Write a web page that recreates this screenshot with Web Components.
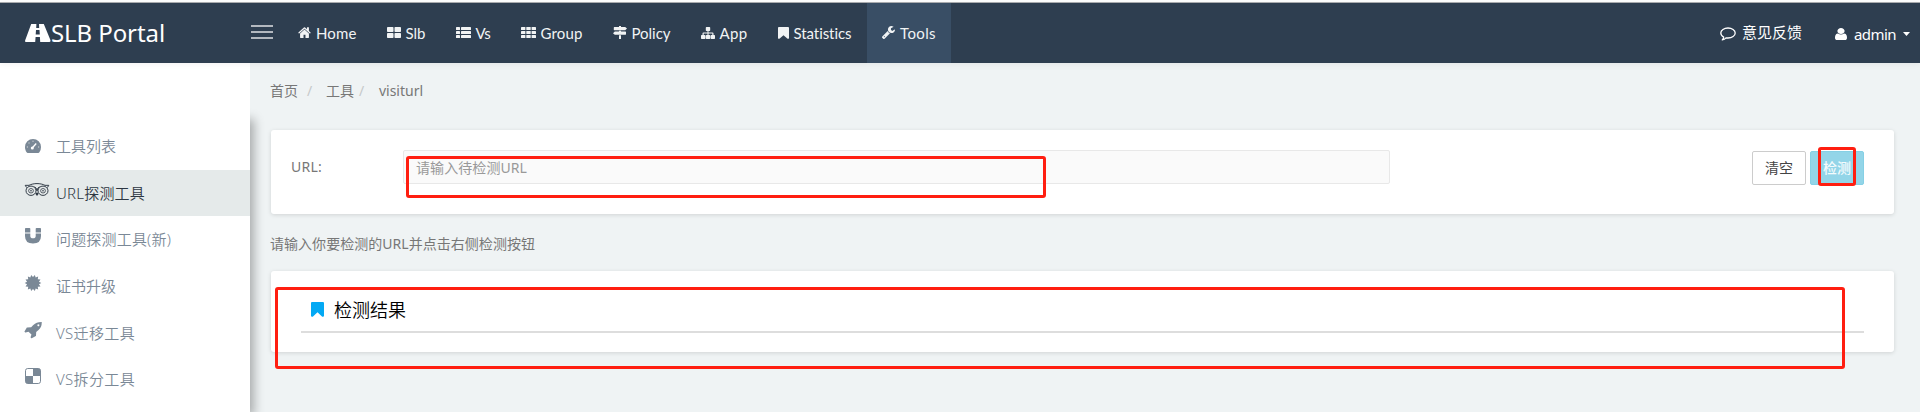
<!DOCTYPE html>
<html lang="zh"><head><meta charset="utf-8"><title>SLB Portal</title>
<style>html,body{margin:0;height:100%;overflow:hidden;background:#eff3f4}</style></head>
<body><slb-app></slb-app>
<script>
const burst=Array.from({length:28},(_,i)=>{const r=i%2?6.1:8.3,a=i*Math.PI/14;return (8+r*Math.cos(a)).toFixed(2)+','+(8+r*Math.sin(a)).toFixed(2)}).join(' ');
const ICONS={
road:['0 0 26 18','<path fill-rule="evenodd" d="M6.2 0H11.4L11.2 4H14.2L14 0H18.8L25.5 16.2Q25.8 18 24.5 18H15.2L14.9 13H10.6L10.2 18H1Q-.3 18 .1 16.4ZM11 6L10.7 10.5H14.8L14.5 6Z"/>'],
home:['50 220 1692 1320','<path d="M1472 992v480q0 26-19 45t-45 19h-384v-384h-256v384h-384q-26 0-45-19t-19-45v-480q0-1 .5-3t.5-3l575-474 575 474q1 2 1 6zm223-69l-62 74q-8 9-21 11h-3q-13 0-21-7l-692-577-692 577q-12 8-24 7-13-2-21-11l-62-74q-8-10-7-23.5t11-21.5l719-599q32-26 76-26t76 26l244 204v-195q0-14 9-23t23-9h192q14 0 23 9t9 23v408l219 182q10 8 11 21.5t-7 23.5z"/>'],
large:['0 0 14 11','<rect width="6.5" height="5" rx=".8"/><rect x="7.5" width="6.5" height="5" rx=".8"/><rect y="6" width="6.5" height="5" rx=".8"/><rect x="7.5" y="6" width="6.5" height="5" rx=".8"/>'],
list:['0 0 15 11',[0,4,8].map(y=>`<rect y="${y}" width="4" height="3" rx=".6"/><rect x="5" y="${y}" width="10" height="3" rx=".6"/>`).join('')],
grid:['0 0 15 11',[0,4,8].map(y=>[0,5.3,10.6].map(x=>`<rect x="${x}" y="${y}" width="4.4" height="3" rx=".6"/>`).join('')).join('')],
signs:['0 0 14 14','<path d="M6 0H8V1H12.2L14 2.7 12.2 4.5H1.3Q.8 4.5.8 4V1.5Q.8 1 1.3 1H6ZM6 5H8V6H12.5Q13 6 13 6.5V9Q13 9.5 12.5 9.5H1.8L0 7.8 1.8 6H6ZM6 10H8V14H6Z"/>'],
tree:['0 0 14 12','<path d="M5.5 0h3q.7 0 .7.7v2.6q0 .7-.7.7h-1v1.5h4q1 0 1 1V8h.8q.7 0 .7.7v2.6q0 .7-.7.7h-3q-.7 0-.7-.7V8.700q0-.7.7-.7h1V6.500h-3.800V8h1q.7 0 .7.7v2.600q0 .7-.7.7h-3q-.7 0-.7-.7V8.700q0-.7.7-.7h1V6.500H2.700V8h1q.7 0 .7.7v2.600q0 .7-.7.7h-3q-.7 0-.7-.7V8.700q0-.7.7-.7h.8V6.500q0-1 1-1h4V4h-1q-.7 0-.7-.7V.7q0-.7.7-.7z"/>'],
bookmark:['256 128 1280 1536','<path d="M1420 128q23 0 44 9 33 13 52.500 41t19.500 62v1289q0 34-19.500 62t-52.500 41q-19 8-44 8-48 0-83-32l-441-424-441 424q-36 33-83 33-23 0-44-9-33-13-52.500-41t-19.500-62v-1289q0-34 19.500-62t52.500-41q21-9 44-9h1048z"/>'],
wrench:['85 128 1641 1643','<path d="M448 1472q0-26-19-45t-45-19-45 19-19 45 19 45 45 19 45-19 19-45zm644-420l-682 682q-37 37-90 37-52 0-91-37l-106-108q-38-36-38-90 0-53 38-91l681-681q39 98 114.500 173.500t173.500 114.500zm634-435q0 39-23 106-47 134-164.500 217.500t-258.500 83.500q-185 0-316.500-131.500t-131.500-316.500 131.500-316.500 316.500-131.500q58 0 121.500 16.500t107.500 46.500q16 11 16 28t-16 28l-293 169v224l193 107q5-3 79-48.500t135.500-81 70.500-35.500q15 0 23.500 10t8.500 25z"/>'],
comment:['0 0 16 14','<path fill="none" stroke="currentColor" stroke-width="1.3" stroke-linejoin="round" d="M8 1C4 1 .8 3.200.8 6c0 1.700 1.200 3.100 2.900 4-.1 1.200-.6 2-1.400 2.900C4 12.600 5.200 11.800 6 10.900c.6.1 1.300.1 2 .1 4 0 7.200-2.200 7.200-5S12 1 8 1z"/>'],
user:['256 128 1280 1536','<path d="M1536 1399q0 109-62.500 187t-150.500 78h-854q-88 0-150.500-78t-62.500-187q0-85 8.500-160.500t31.500-152 58.500-131 94-89 134.500-34.500q131 128 313 128t313-128q76 0 134.500 34.500t94 89 58.500 131 31.500 152 8.500 160.500zm-256-887q0 159-112.500 271.500t-271.500 112.500-271.500-112.500-112.500-271.500 112.500-271.500 271.500-112.500 271.500 112.500 112.500 271.500z"/>'],
caret:['0 0 8 4','<path d="M0 0H8L4 4Z"/>'],
gauge:['0 0 16 14','<path d="M8 0a8 8 0 0 0-8 8c0 2 .6 3.900 1.600 5.300.3.500.6.700 1.100.7h10.600c.5 0 .8-.2 1.100-.7A9 9 0 0 0 16 8a8 8 0 0 0-8-8z"/><path d="M7 9.200L11.200 4.500" stroke="#fff" stroke-width="1.300"/><circle cx="7.300" cy="9" r="1.500" fill="#fff"/><g fill="#c3c9ce"><circle cx="2.400" cy="8" r=".7"/><circle cx="4" cy="4" r=".7"/><circle cx="8" cy="2.300" r=".7"/><circle cx="13.600" cy="8" r=".7"/></g>'],
trip:['0 0 24 15','<g fill="none" stroke="currentColor"><circle cx="6" cy="8.300" r="5" stroke-width="1"/><circle cx="18" cy="8.300" r="5" stroke-width="1"/><circle cx="6" cy="8.300" r="2.400" stroke-width=".8"/><circle cx="18" cy="8.300" r="2.400" stroke-width=".8"/><path d="M.2 2.500H4C8.500 0 15.500 0 20 2.500h3.800L22.300 5M.2 2.500L1.700 5M9.500 4Q12 5.300 12 8.500 12 5.300 14.500 4" stroke-width="1"/></g><path d="M10.300 11.500L12 14 13.700 11.500 12 10Z"/><circle cx="6" cy="8.300" r=".8"/><circle cx="18" cy="8.300" r=".8"/>'],
magnet:['0 0 16 16','<path d="M0 .8Q0 0 .8 0H4.500Q5.300 0 5.300.8V4.500H0ZM10.700.8Q10.700 0 11.500 0h3.700q.8 0 .8.8V4.500H10.700ZM0 5.500H5.300V8q0 2.300 2.700 2.300T10.700 8V5.500H16V8q0 7.500-8 7.500T0 8Z"/>'],
cert:['0 0 16 16',`<polygon points="${burst}"/>`],
rocket:['85 128 1600 1600','<path fill-rule="evenodd" d="M1440 448q0-40-28-68t-68-28-68 28-28 68 28 68 68 28 68-28 28-68zm224-288q0 249-75.500 430.500t-253.500 360.500q-81 80-195 176l-20 379q-2 16-16 26l-384 224q-7 4-16 4-12 0-23-9l-64-64q-13-14-8-32l85-276-281-281-276 85q-3 1-9 1-14 0-23-9l-64-64q-17-19-5-39l224-384q10-14 26-16l379-20q96-114 176-195 188-187 358-258t431-71q14 0 24 9.500t10 22.500z"/>'],
delicious:['0 0 16 16','<rect x=".5" y=".5" width="15" height="15" rx="2.200" fill="#fff" stroke="currentColor"/><path d="M8 .5h5.500q2 0 2 2V8H8ZM.5 8H8v7.500H2.500q-2 0-2-2Z"/>']
};
const CJK='"Noto Sans CJK SC",sans-serif';
function define(name,build){customElements.define(name,class extends HTMLElement{
  connectedCallback(){ if(this.shadowRoot)return; this.attachShadow({mode:'open'}).innerHTML=build(this); }
});}

define('slb-icon',el=>{const [v,b]=ICONS[el.getAttribute('name')];return `<style>:host{display:block;flex:none;width:${el.getAttribute('w')}px;height:${el.getAttribute('h')}px}svg{display:block;width:100%;height:100%;overflow:visible}</style><svg viewBox="${v}" preserveAspectRatio="none" fill="currentColor">${b}</svg>`});

/* Text that is tracked so its advance equals the width in "w". */
customElements.define('fit-text',class extends HTMLElement{
  connectedCallback(){
    if(this.shadowRoot)return;
    const w=+this.getAttribute('w');
    this.attachShadow({mode:'open'}).innerHTML=`<style>:host{display:block;flex:none;width:${w}px;white-space:nowrap}span{display:inline-block}</style><span><slot></slot></span>`;
    const s=this.shadowRoot.querySelector('span'),n=[...this.textContent].length;
    s.style.letterSpacing=((w-s.getBoundingClientRect().width)/n).toFixed(3)+'px';
  }
});

define('nav-item',el=>`<style>:host{display:flex;align-items:center;box-sizing:border-box;height:60px;padding:0 15px;gap:5px;color:#f1f3f4;font:15px/20px Lato,${CJK}}:host([active]){background:#394e65;width:84px}</style><slot></slot>`);

define('top-bar',()=>`<style>
:host{display:flex;height:60px;margin-top:2px;border-top:1px solid #a9abae;background:#2e3e50;position:relative;z-index:3;color:#fff;box-shadow:0 1px 6px rgba(0,0,0,.06)}
.brand{display:flex;align-items:center;width:225px;padding-left:25px;font:24px/30px "Noto Sans",${CJK}}
.brand fit-text{margin-top:-1px}
.menu{width:22px;display:flex;flex-direction:column;justify-content:center;gap:4px;margin:0 10px 0 1px;padding-bottom:2px}
.menu i{height:2px;background:#b3b8bf}
.links{display:flex;flex:1}.links slb-icon{margin-bottom:1px}.links fit-text{margin-top:-1px}
.fb,.us{display:flex;align-items:center;font:15px/20px "Noto Sans",${CJK}}
.fb{gap:6px;margin-right:33px}.fb slb-icon{margin-top:2px}.fb fit-text{margin-top:-2px}.us{gap:7px;margin-right:10px;padding-top:1px}.us slb-icon{margin-top:1px}
</style>
<div class="brand"><slb-icon name="road" w="26" h="18"></slb-icon><fit-text w="114">SLB Portal</fit-text></div>
<div class="menu"><i></i><i></i><i></i></div>
<div class="links">
<nav-item><slb-icon name="home" w="13" h="11"></slb-icon><fit-text w="40.5">Home</fit-text></nav-item>
<nav-item><slb-icon name="large" w="14" h="11"></slb-icon><fit-text w="20">Slb</fit-text></nav-item>
<nav-item><slb-icon name="list" w="15" h="11"></slb-icon><fit-text w="15">Vs</fit-text></nav-item>
<nav-item><slb-icon name="grid" w="15" h="11"></slb-icon><fit-text w="42">Group</fit-text></nav-item>
<nav-item><slb-icon name="signs" w="14" h="13"></slb-icon><fit-text w="39">Policy</fit-text></nav-item>
<nav-item><slb-icon name="tree" w="14" h="12"></slb-icon><fit-text w="28">App</fit-text></nav-item>
<nav-item><slb-icon name="bookmark" w="11" h="12"></slb-icon><fit-text w="58.500">Statistics</fit-text></nav-item>
<nav-item active><slb-icon name="wrench" w="13" h="13"></slb-icon><fit-text w="36">Tools</fit-text></nav-item>
</div>
<div class="fb"><slb-icon name="comment" w="16" h="14"></slb-icon><fit-text w="60">意见反馈</fit-text></div>
<div class="us"><slb-icon name="user" w="12" h="12"></slb-icon><fit-text w="42">admin</fit-text><slb-icon name="caret" w="7" h="4"></slb-icon></div>`);

define('side-item',el=>`<style>:host{display:flex;box-sizing:border-box;height:46.600px;padding-left:25px;align-items:center;color:#7a8896;font:15px/22px "Noto Sans",${CJK};font-weight:350}
:host([active]){background:#e5eaea;color:#2d3742}.i{width:31px;flex:none;padding-bottom:${el.getAttribute('lift')||6}px}</style><div class="i"><slot name="icon"></slot></div><slot></slot>`);

define('side-bar',()=>`<style>
:host{display:flex;flex-direction:column;width:250px;flex:none;background:#fff;z-index:2}
nav{flex:1;margin-top:52px;padding-top:8px;background:#fff;box-shadow:4px 4px 10px rgba(0,0,0,.3);clip-path:inset(-12px -24px 0 0)}
.lid{height:62px;margin-bottom:-62px;background:#fff;position:relative;z-index:1}
</style><div class="lid"></div><nav>
<side-item lift="0"><slb-icon slot="icon" name="gauge" w="16" h="14"></slb-icon><fit-text w="60">工具列表</fit-text></side-item>
<side-item active><slb-icon slot="icon" name="trip" w="24" h="14"></slb-icon><fit-text w="89">URL探测工具</fit-text></side-item>
<side-item><slb-icon slot="icon" name="magnet" w="16" h="16"></slb-icon><fit-text w="115">问题探测工具(新)</fit-text></side-item>
<side-item><slb-icon slot="icon" name="cert" w="16" h="16"></slb-icon><fit-text w="60">证书升级</fit-text></side-item>
<side-item><slb-icon slot="icon" name="rocket" w="17" h="16"></slb-icon><fit-text w="79">VS迁移工具</fit-text></side-item>
<side-item><slb-icon slot="icon" name="delicious" w="16" h="16"></slb-icon><fit-text w="79">VS拆分工具</fit-text></side-item>
</nav>`);

define('bread-crumb',()=>`<style>:host{display:flex;height:67px;align-items:flex-start;padding-top:18px;box-sizing:border-box;font:14px/20px "Noto Sans",${CJK};color:#777}i{font-style:normal;color:#c6c9ca;width:7px}</style>
<fit-text w="28">首页</fit-text><i style="margin:0 12px 0 9px">/</i><fit-text w="28">工具</fit-text><i style="margin:0 13px 0 5px">/</i><fit-text w="44">visiturl</fit-text>`);

define('ui-card',()=>`<style>:host{display:flex;box-sizing:border-box;background:#fff;border-radius:3px;box-shadow:0 1px 4px rgba(0,0,0,.13);margin-left:1px;width:1623px}</style><slot></slot>`);

define('ui-button',()=>`<style>:host{display:flex;align-items:center;justify-content:center;box-sizing:border-box;width:54px;height:34px;border:1px solid #ccc;border-radius:2px;background:#fff;color:#444;font:14px/20px ${CJK};padding-bottom:2px}
:host([primary]){background:#93d5e8;border-color:#86d0e5;color:#f4fbfd;font-weight:500}</style><slot></slot>`);

define('mark-box',el=>{const [x,y,w,h]=el.getAttribute('box').split(' ');return `<style>:host{position:absolute;z-index:5;box-sizing:border-box;border:3px solid #ff1e10;border-radius:3px;left:${x}px;top:${y}px;width:${w}px;height:${h}px}</style>`});

define('tool-page',()=>`<style>
:host{display:block;flex:1;padding-left:20px;font:14px/20px "Noto Sans",${CJK};color:#777}
.form{height:84px;padding:20px 30px 0 20px}
.label{width:112px;padding-top:7px}
.input{box-sizing:border-box;width:987px;height:34px;border:1px solid #e8e8e8;border-radius:2px;background:#fafafa;padding:7px 12px;color:#999}
.btns{display:flex;gap:4px;margin:1px 0 0 auto}
.hint{height:57px;padding-top:20px;box-sizing:border-box}
.result{height:81px;padding:0 30px}
.head{display:flex;align-items:center;gap:10px;width:100%;height:62px;box-sizing:border-box;border-bottom:2px solid #ddd;padding:17px 0 0 10px;color:#000;font-size:18px;font-weight:350}
.head slb-icon{color:#03a9f4}
</style>
<bread-crumb></bread-crumb>
<ui-card class="form"><div class="label"><fit-text w="31">URL:</fit-text></div><div class="input"><fit-text w="111">请输入待检测URL</fit-text></div><div class="btns"><ui-button>清空</ui-button><ui-button primary>检测</ui-button></div></ui-card>
<div class="hint"><fit-text w="265">请输入你要检测的URL并点击右侧检测按钮</fit-text></div>
<ui-card class="result"><div class="head"><slb-icon name="bookmark" w="13" h="15"></slb-icon><fit-text w="72">检测结果</fit-text></div></ui-card>`);

define('slb-app',()=>`<style>:host{display:flex;flex-direction:column;height:412px;background:#fff;position:relative;overflow:hidden}.body{display:flex;flex:1;background:#eff3f4}</style>
<top-bar></top-bar><div class="body"><side-bar></side-bar><tool-page></tool-page></div>
<mark-box box="406 156 640 42"></mark-box><mark-box box="1818 147 38 39"></mark-box><mark-box box="275 287 1570 82"></mark-box>`);
</script></body></html>
